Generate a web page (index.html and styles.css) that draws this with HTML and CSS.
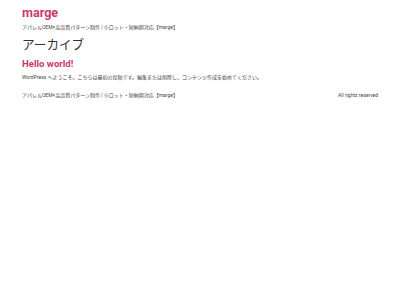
FILE: index.html
```html
<!DOCTYPE html>
<html lang="ja">
<head>
<meta charset="utf-8">
<title>marge</title>
<link rel="stylesheet" href="styles.css">
</head>
<body>
<div class="container">
  <header class="site-header">
    <div class="site-title">marge</div>
    <p class="site-desc">アパレルOEM×高品質パターン制作 | 小ロット・短納期対応【marge】</p>
  </header>
  <main class="site-main">
    <h1 class="page-title">アーカイブ</h1>
    <article class="post">
      <h2 class="post-title">Hello world!</h2>
      <p class="post-excerpt">WordPress へようこそ。こちらは最初の投稿です。編集または削除し、コンテンツ作成を始めてください。</p>
    </article>
  </main>
  <footer class="site-footer">
    <span class="footer-name">アパレルOEM×高品質パターン制作 | 小ロット・短納期対応【marge】</span>
    <span class="footer-copy">All rights reserved</span>
  </footer>
</div>
</body>
</html>
```
FILE: styles.css
```css
html, body {
  margin: 0;
  padding: 0;
  background: #ffffff;
}
body {
  font-family: Roboto, "Noto Sans CJK JP", sans-serif;
  color: #333333;
}
.container {
  margin: 0 22px;
  display: flex;
  flex-direction: column;
}
.site-header {
  padding-top: 5px;
}
.site-title {
  font-size: 12.6px;
  line-height: 15px;
  font-weight: 700;
  color: #c7396f;
}
.site-desc {
  margin: 4px 0 0;
  font-size: 5px;
  line-height: 6px;
  color: #444444;
}
.page-title {
  margin: 7px 0 0;
  font-size: 12.6px;
  line-height: 16px;
  font-weight: 400;
  color: #333333;
}
.post-title {
  margin: 5px 0 0;
  font-size: 9.6px;
  line-height: 11px;
  font-weight: 700;
  color: #c7396f;
}
.post-excerpt {
  margin: 5px 0 0;
  font-size: 5px;
  line-height: 6px;
  color: #444444;
}
.site-footer {
  margin-top: 12px;
  display: flex;
  justify-content: space-between;
  font-size: 5px;
  line-height: 6px;
  color: #444444;
}
```
